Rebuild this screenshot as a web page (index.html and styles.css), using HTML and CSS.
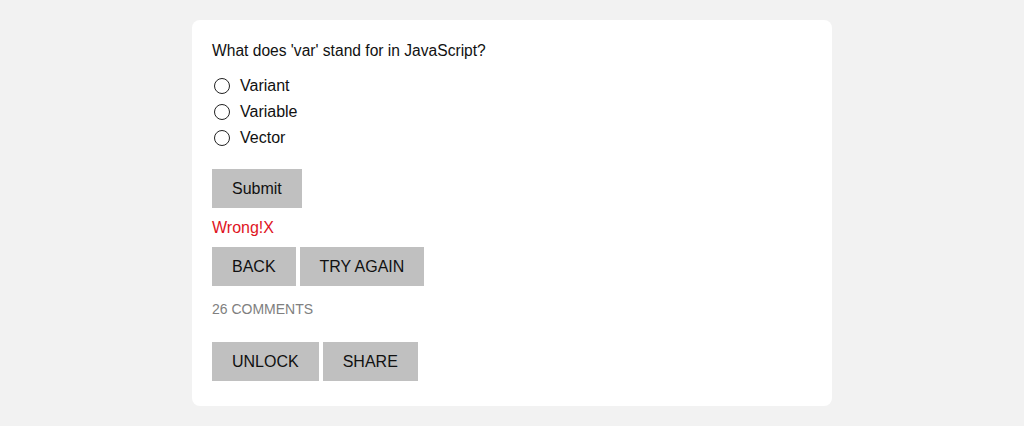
FILE: index.html
```html
<!DOCTYPE html>
<html>
<head>
<meta charset="utf-8">
<link rel="stylesheet" href="styles.css">
</head>
<body>
<div class="card">
  <p class="question">What does 'var' stand for in JavaScript?</p>
  <div class="options">
    <label class="option"><input type="radio" name="q"><span>Variant</span></label>
    <label class="option"><input type="radio" name="q"><span>Variable</span></label>
    <label class="option"><input type="radio" name="q"><span>Vector</span></label>
  </div>
  <div class="row submit-row"><button class="btn">Submit</button></div>
  <div class="result">Wrong!X</div>
  <div class="row actions"><button class="btn">BACK</button><button class="btn">TRY AGAIN</button></div>
  <div class="comments">26 COMMENTS</div>
  <div class="row actions2"><button class="btn">UNLOCK</button><button class="btn">SHARE</button></div>
</div>
</body>
</html>
```
FILE: styles.css
```css
html, body {
  margin: 0;
  padding: 0;
}
body {
  background: #f2f2f2;
  font-family: "Liberation Sans", Arial, sans-serif;
  color: #111;
  padding-top: 20px;
}
.card {
  width: 640px;
  height: 386px;
  box-sizing: border-box;
  margin: 0 auto;
  background: #fff;
  border-radius: 8px;
  padding: 21px 20px 20px;
  display: flex;
  flex-direction: column;
  align-items: flex-start;
}
.question {
  margin: 1px 0 0;
  font-size: 15.6px;
  line-height: 18px;
}
.options {
  margin-top: 13px;
  display: flex;
  flex-direction: column;
}
.option {
  display: flex;
  align-items: center;
  height: 26px;
  font-size: 16px;
}
.option input {
  appearance: none;
  -webkit-appearance: none;
  width: 16px;
  height: 16px;
  margin: 0 10px 0 2px;
  border: 1px solid #222;
  border-radius: 50%;
  background: #fff;
  box-sizing: border-box;
}
.row {
  display: flex;
  gap: 4px;
}
.submit-row {
  margin-top: 18px;
}
.btn {
  font-family: "Liberation Sans", Arial, sans-serif;
  font-size: 16px;
  line-height: 19px;
  padding: 10px 20px;
  background: #c0c0c0;
  border: none;
  color: #111;
  margin: 0;
  border-radius: 0;
}
.result {
  margin-top: 11px;
  color: #e0141e;
  font-size: 16px;
  line-height: 18px;
}
.actions {
  margin-top: 10px;
}
.comments {
  margin-top: 15px;
  font-size: 14px;
  line-height: 16px;
  color: #808080;
}
.actions2 {
  margin-top: 25px;
}
```
